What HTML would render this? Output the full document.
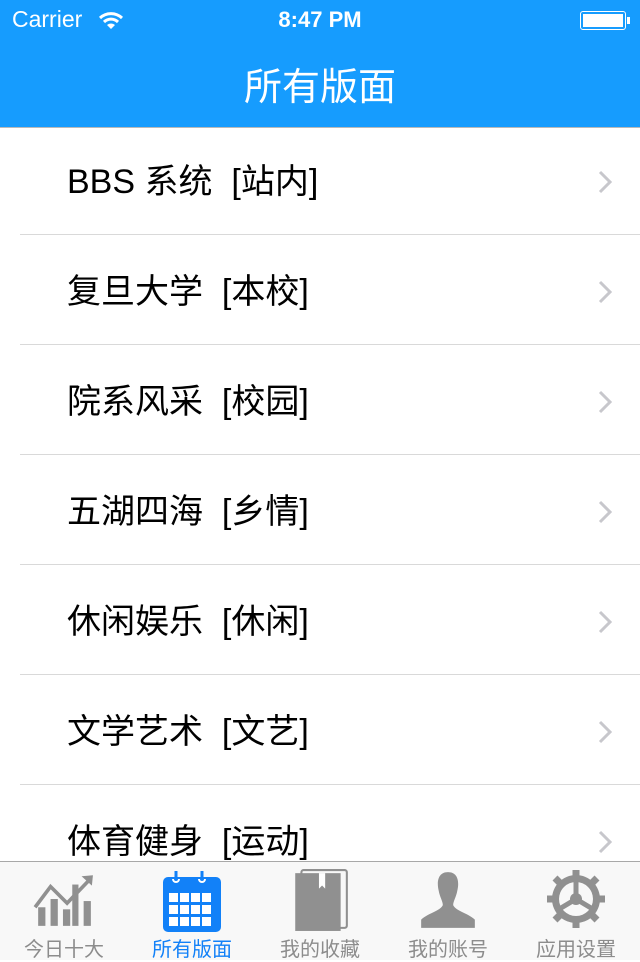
<!DOCTYPE html>
<html><head><meta charset="utf-8"><style>
*{margin:0;padding:0;box-sizing:border-box}
body{width:640px;height:960px;overflow:hidden;background:#fff;font-family:"Liberation Sans","Noto Sans CJK SC",sans-serif;position:relative}
.hdr{position:absolute;top:0;left:0;width:640px;height:128px;background:#169cfe;color:#fff;border-bottom:1px solid #b9b9b9}
.sb{position:absolute;top:6px;font-size:23px}
.title{position:absolute;top:56px;width:100%;text-align:center;font-size:38px;font-family:"Noto Sans CJK SC",sans-serif}
.row{position:absolute;left:0;width:640px;height:110px}
.row .t{position:absolute;left:67px;top:37px;font-size:34px;line-height:40px;color:#000;white-space:pre}
.row .sep{position:absolute;left:20px;right:0;bottom:0;height:1px;background:#d9d9d9}
.chev{position:absolute;right:28px;top:45px}
.tab{position:absolute;top:861px;left:0;width:640px;height:99px;background:#f8f8f8;border-top:1px solid #a8a8a8}
.ti{position:absolute;top:0;width:128px;height:99px;text-align:center}
.ti span{position:absolute;left:0;right:0;top:71px;font-size:20px;color:#8c8c8c}
.ti svg{position:absolute;left:33px;top:6px}
</style></head><body>
<div class="hdr">
<div class="sb" style="left:12px">Carrier</div>
<svg style="position:absolute;left:98px;top:11px" width="26" height="20" viewBox="0 0 26 20"><path d="M2 7 A16 16 0 0 1 24 7" stroke="#fff" stroke-width="3" fill="none"/><path d="M6 11 A10 10 0 0 1 20 11" stroke="#fff" stroke-width="3" fill="none"/><path d="M13 18 L9 14 A6 6 0 0 1 17 14Z" fill="#fff"/></svg>
<div class="sb" style="left:0;width:640px;text-align:center;font-weight:bold;font-size:22px;top:7px">8:47 PM</div>
<div style="position:absolute;left:580px;top:11px;width:46px;height:19px;border:1.5px solid #fff;border-radius:3px;padding:2px"><div style="background:#fff;width:100%;height:100%"></div></div>
<div style="position:absolute;left:627px;top:17px;width:3px;height:7px;background:#fff"></div>
<div class="title">所有版面</div>
</div>

<div class="row" style="top:125px"><div class="t">BBS 系统  [站内]</div><svg class="chev" width="14" height="24"><path d="M2 2 L12 12 L2 22" stroke="#c7c7cc" stroke-width="3" fill="none"/></svg><div class="sep"></div></div>
<div class="row" style="top:235px"><div class="t">复旦大学  [本校]</div><svg class="chev" width="14" height="24"><path d="M2 2 L12 12 L2 22" stroke="#c7c7cc" stroke-width="3" fill="none"/></svg><div class="sep"></div></div>
<div class="row" style="top:345px"><div class="t">院系风采  [校园]</div><svg class="chev" width="14" height="24"><path d="M2 2 L12 12 L2 22" stroke="#c7c7cc" stroke-width="3" fill="none"/></svg><div class="sep"></div></div>
<div class="row" style="top:455px"><div class="t">五湖四海  [乡情]</div><svg class="chev" width="14" height="24"><path d="M2 2 L12 12 L2 22" stroke="#c7c7cc" stroke-width="3" fill="none"/></svg><div class="sep"></div></div>
<div class="row" style="top:565px"><div class="t">休闲娱乐  [休闲]</div><svg class="chev" width="14" height="24"><path d="M2 2 L12 12 L2 22" stroke="#c7c7cc" stroke-width="3" fill="none"/></svg><div class="sep"></div></div>
<div class="row" style="top:675px"><div class="t">文学艺术  [文艺]</div><svg class="chev" width="14" height="24"><path d="M2 2 L12 12 L2 22" stroke="#c7c7cc" stroke-width="3" fill="none"/></svg><div class="sep"></div></div>
<div class="row" style="top:785px"><div class="t">体育健身  [运动]</div><svg class="chev" width="14" height="24"><path d="M2 2 L12 12 L2 22" stroke="#c7c7cc" stroke-width="3" fill="none"/></svg><div class="sep"></div></div>

<div class="tab">
<div class="ti" style="left:0"><svg width="62" height="62" viewBox="0 0 60 60"><g fill="#909090"><rect x="5" y="38" width="7" height="18"/><rect x="17" y="30" width="7" height="26"/><rect x="29" y="40" width="7" height="16"/><rect x="38" y="16" width="6" height="40"/><rect x="49" y="32" width="7" height="24"/></g><path d="M2 38 L17 18 L33 34 L56 10" stroke="#909090" stroke-width="3.5" fill="none"/><path d="M47 8 L58 7 L57 17Z" fill="#909090"/></svg><span>今日十大</span></div>
<div class="ti" style="left:128px"><svg width="62" height="66" viewBox="0 0 62 64"><rect x="2" y="8" width="58" height="55" rx="5" fill="#1281f8"/><g fill="#fff"><rect x="8" y="24" width="9" height="9"/><rect x="19" y="24" width="9" height="9"/><rect x="30" y="24" width="9" height="9"/><rect x="41" y="24" width="9" height="9"/><rect x="8" y="36" width="9" height="9"/><rect x="19" y="36" width="9" height="9"/><rect x="30" y="36" width="9" height="9"/><rect x="41" y="36" width="9" height="9"/><rect x="8" y="48" width="9" height="9"/><rect x="19" y="48" width="9" height="9"/><rect x="30" y="48" width="9" height="9"/><rect x="41" y="48" width="9" height="9"/></g><path d="M15 2 V14 M41 2 V14" stroke="#1281f8" stroke-width="3"/><path d="M12 10 A3 3 0 0 0 18 10 M38 10 A3 3 0 0 0 44 10" stroke="#fff" stroke-width="2" fill="none"/></svg><span style="color:#1281f8">所有版面</span></div>
<div class="ti" style="left:256px"><svg width="62" height="64" viewBox="0 0 60 62"><rect x="12" y="2" width="44" height="56" rx="2" fill="none" stroke="#909090" stroke-width="2"/><rect x="6" y="5" width="44" height="56" fill="#909090"/><path d="M29 5 V20 L32 17 L35 20 V5" fill="#fff"/></svg><span>我的收藏</span></div>
<div class="ti" style="left:384px"><svg width="62" height="64" viewBox="0 0 60 62"><path d="M30 4 C20 4 19 14 21 22 C22 28 25 32 25 36 C22 42 12 43 4 50 V58 H56 V50 C48 43 38 42 35 36 C35 32 38 28 39 22 C41 14 40 4 30 4Z" fill="#909090"/></svg><span>我的账号</span></div>
<div class="ti" style="left:512px"><svg width="62" height="62" viewBox="0 0 62 62"><g fill="#909090"><circle cx="31" cy="31" r="24"/><g stroke="#909090" stroke-width="7"><path d="M31 2V60M2 31H60M10 10L52 52M52 10L10 52"/></g></g><circle cx="31" cy="31" r="17" fill="#f8f8f8"/><g stroke="#909090" stroke-width="5"><path d="M31 31V14M31 31L16 40M31 31L46 40"/></g><circle cx="31" cy="31" r="6" fill="#909090"/></svg><span>应用设置</span></div>
</div>
</body></html>
